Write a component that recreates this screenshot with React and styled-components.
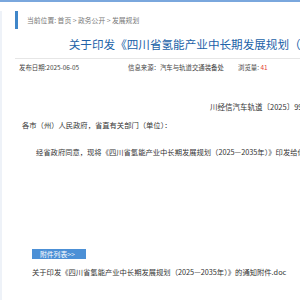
import styled, { createGlobalStyle } from 'styled-components';

const Global = createGlobalStyle`
  html, body {
    margin: 0;
    padding: 0;
    background: #ffffff;
    overflow: hidden;
  }
  body {
    font-family: "Noto Sans CJK SC", "Noto Sans", sans-serif;
    color: #333333;
  }
`;

const Frame = styled.div`
  width: 300px;
  height: 300px;
  overflow: hidden;
  border-top: 2px solid #7aa7dd;
  box-sizing: border-box;
  position: relative;
`;

const Page = styled.div`
  width: 495px;
  height: 100%;
  box-sizing: border-box;
  border-left: 2px solid #eef2f8;
  padding: 0 15px 0 13px;
`;

const Crumb = styled.div`
  display: flex;
  align-items: center;
  height: 18px;
  margin-top: 9px;
  font-size: 6.8px;
  color: #777777;
  span {
    margin-left: 9px;
  }
  &::before {
    content: '';
    width: 3px;
    height: 18px;
    background: #3f86c9;
  }
`;

const Title = styled.h1`
  margin: 6px 0 0;
  font-size: 11.6px;
  line-height: 18px;
  font-weight: 400;
  color: #2262a8;
  text-align: center;
  white-space: nowrap;
`;

const Meta = styled.div`
  display: grid;
  grid-template-columns: 109px 110px auto;
  margin-top: 5px;
  padding: 4px 0 0 4px;
  border-top: 1px solid #e6e6e6;
  font-size: 6.4px;
  line-height: 10px;
  color: #444444;
  white-space: nowrap;
`;

const Hits = styled.span`
  color: #e43b2f;
`;

const DocNo = styled.div`
  margin-top: 28px;
  padding-right: 170px;
  text-align: right;
  font-size: 7.5px;
  line-height: 12px;
  white-space: nowrap;
`;

const Para = styled.p`
  margin: ${(p) => p.$top}px 0 0;
  padding-left: ${(p) => p.$indent}px;
  font-size: 7.3px;
  line-height: 12px;
  color: #333333;
  white-space: nowrap;
`;

const Attach = styled.div`
  margin-top: 80px;
  padding-left: 17px;
`;

const AttachTitle = styled.div`
  display: inline-block;
  width: 54px;
  height: 10px;
  line-height: 10px;
  background: #4c90d6;
  color: #ffffff;
  font-size: 6.8px;
  padding-left: 8px;
  box-sizing: border-box;
`;

const FileLink = styled.a`
  display: block;
  margin-top: 4px;
  font-size: 7.3px;
  line-height: 12px;
  color: #333333;
  text-decoration: none;
  white-space: nowrap;
`;

export default function App() {
  return (
    <>
      <Global />
      <Frame>
        <Page>
          <Crumb>
            <span>当前位置: 首页 &gt; 政务公开 &gt; 发展规划</span>
          </Crumb>
          <Title>关于印发《四川省氢能产业中长期发展规划（2025—2035年）》的通知</Title>
          <Meta>
            <span>发布日期:2025-06-05</span>
            <span>信息来源：汽车与轨道交通装备处</span>
            <span>
              浏览量: <Hits>41</Hits>
            </span>
          </Meta>
          <DocNo>川经信汽车轨道〔2025〕99号</DocNo>
          <Para $top={6} $indent={7}>
            各市（州）人民政府，省直有关部门（单位）：
          </Para>
          <Para $top={15} $indent={21}>
            经省政府同意，现将《四川省氢能产业中长期发展规划（2025—2035年）》印发给你们，请认真贯彻执行。
          </Para>
          <Attach>
            <AttachTitle>附件列表&gt;&gt;</AttachTitle>
            <FileLink href="#">
              关于印发《四川省氢能产业中长期发展规划（2025—2035年）》的通知附件.doc
            </FileLink>
          </Attach>
        </Page>
      </Frame>
    </>
  );
}
